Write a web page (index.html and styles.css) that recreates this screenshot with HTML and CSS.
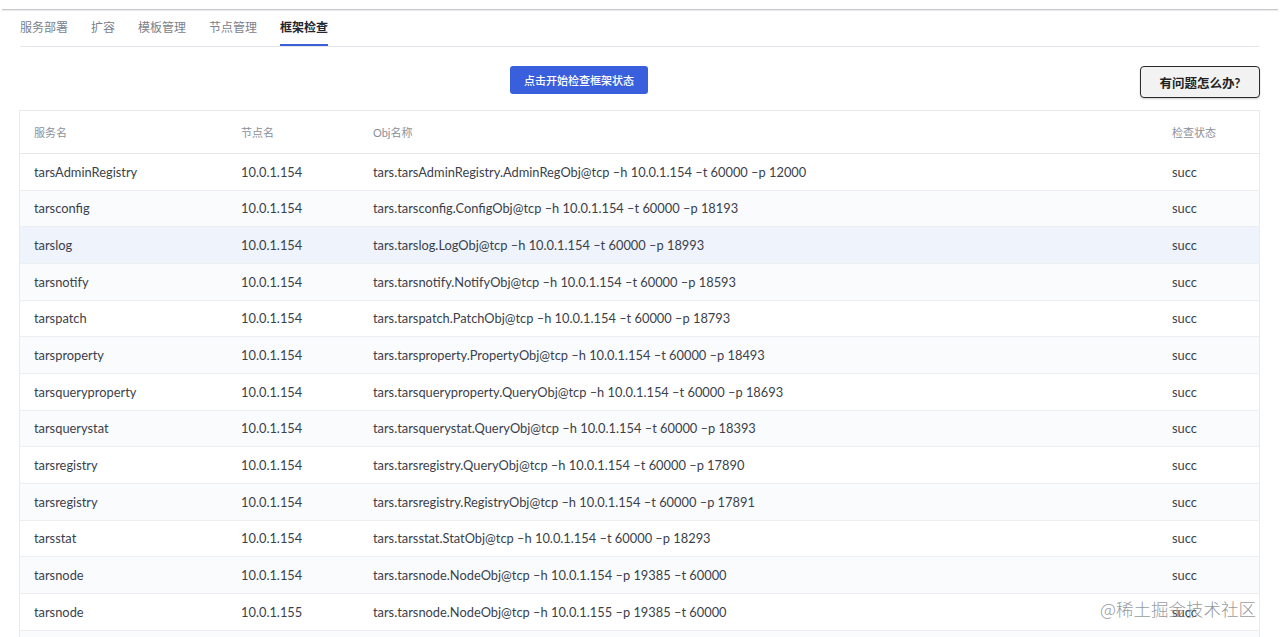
FILE: index.html
```html
<!DOCTYPE html>
<html lang="zh">
<head>
<meta charset="utf-8">
<link rel="stylesheet" href="styles.css">
</head>
<body>
<div class="topline"></div>
<div class="page">
  <nav class="tabs">
    <span class="tab">服务部署</span>
    <span class="tab">扩容</span>
    <span class="tab">模板管理</span>
    <span class="tab">节点管理</span>
    <span class="tab active">框架检查</span>
  </nav>
  <div class="toolbar">
    <button class="btn-primary">点击开始检查框架状态</button>
    <button class="btn-help">有问题怎么办?</button>
  </div>
  <table class="grid">
    <thead>
      <tr><th class="c1">服务名</th><th class="c2">节点名</th><th class="c3">Obj名称</th><th class="c4">检查状态</th></tr>
    </thead>
    <tbody>
      <tr><td>tarsAdminRegistry</td><td>10.0.1.154</td><td>tars.tarsAdminRegistry.AdminRegObj@tcp –h 10.0.1.154 –t 60000 –p 12000</td><td>succ</td></tr>
      <tr><td>tarsconfig</td><td>10.0.1.154</td><td>tars.tarsconfig.ConfigObj@tcp –h 10.0.1.154 –t 60000 –p 18193</td><td>succ</td></tr>
      <tr class="hover"><td>tarslog</td><td>10.0.1.154</td><td>tars.tarslog.LogObj@tcp –h 10.0.1.154 –t 60000 –p 18993</td><td>succ</td></tr>
      <tr><td>tarsnotify</td><td>10.0.1.154</td><td>tars.tarsnotify.NotifyObj@tcp –h 10.0.1.154 –t 60000 –p 18593</td><td>succ</td></tr>
      <tr><td>tarspatch</td><td>10.0.1.154</td><td>tars.tarspatch.PatchObj@tcp –h 10.0.1.154 –t 60000 –p 18793</td><td>succ</td></tr>
      <tr><td>tarsproperty</td><td>10.0.1.154</td><td>tars.tarsproperty.PropertyObj@tcp –h 10.0.1.154 –t 60000 –p 18493</td><td>succ</td></tr>
      <tr><td>tarsqueryproperty</td><td>10.0.1.154</td><td>tars.tarsqueryproperty.QueryObj@tcp –h 10.0.1.154 –t 60000 –p 18693</td><td>succ</td></tr>
      <tr><td>tarsquerystat</td><td>10.0.1.154</td><td>tars.tarsquerystat.QueryObj@tcp –h 10.0.1.154 –t 60000 –p 18393</td><td>succ</td></tr>
      <tr><td>tarsregistry</td><td>10.0.1.154</td><td>tars.tarsregistry.QueryObj@tcp –h 10.0.1.154 –t 60000 –p 17890</td><td>succ</td></tr>
      <tr><td>tarsregistry</td><td>10.0.1.154</td><td>tars.tarsregistry.RegistryObj@tcp –h 10.0.1.154 –t 60000 –p 17891</td><td>succ</td></tr>
      <tr><td>tarsstat</td><td>10.0.1.154</td><td>tars.tarsstat.StatObj@tcp –h 10.0.1.154 –t 60000 –p 18293</td><td>succ</td></tr>
      <tr><td>tarsnode</td><td>10.0.1.154</td><td>tars.tarsnode.NodeObj@tcp –h 10.0.1.154 –p 19385 –t 60000</td><td>succ</td></tr>
      <tr><td>tarsnode</td><td>10.0.1.155</td><td>tars.tarsnode.NodeObj@tcp –h 10.0.1.155 –p 19385 –t 60000</td><td>succ</td></tr>
      <tr class="empty"><td></td><td></td><td></td><td></td></tr>
    </tbody>
  </table>
</div>
<div class="watermark">@稀土掘金技术社区</div>
</body>
</html>
```
FILE: styles.css
```css
html, body {
  margin: 0;
  padding: 0;
  background: #ffffff;
  overflow: hidden;
  height: 637px;
}
body {
  font-family: Lato, "Noto Sans CJK SC", sans-serif;
  color: #3a3f4b;
  position: relative;
}
.topline {
  height: 1px;
  margin: 9px 2px 0 2px;
  background: #c9cbcf;
  box-shadow: 0 1px 1px #e6e7ea;
}
.page {
  padding: 0 21px 0 19px;
}
.tabs {
  display: flex;
  border-bottom: 1px solid #e3e5ea;
  margin-left: 1px;
  height: 36px;
}
.tab {
  font-size: 12px;
  line-height: 16px;
  color: #7b818c;
  padding-top: 10px;
  margin-right: 23px;
  height: 25px;
  box-sizing: border-box;
}
.tab.active {
  color: #222630;
  font-weight: 700;
  border-bottom: 2px solid #3b5fd8;
  height: 36px;
}
.toolbar {
  display: flex;
  justify-content: flex-end;
  align-items: flex-start;
  position: relative;
  height: 63px;
  padding-top: 19px;
  box-sizing: border-box;
}
.btn-primary {
  position: absolute;
  left: 491px;
  top: 19px;
  width: 138px;
  height: 28px;
  border: none;
  border-radius: 3px;
  background: #3a5fdc;
  color: #fff;
  font-family: Lato, "Noto Sans CJK SC", sans-serif;
  font-size: 11px;
  font-weight: 500;
}
.btn-help {
  width: 120px;
  height: 32px;
  margin-right: -1px;
  border: 1.5px solid #2b2b2b;
  border-radius: 4px;
  background: #f2f2f2;
  color: #1f1f1f;
  font-family: Lato, "Noto Sans CJK SC", sans-serif;
  font-size: 12.5px;
  font-weight: 700;
  box-shadow: 0 1px 2px rgba(0,0,0,0.2);
}
.grid {
  width: 1241px;
  border-collapse: collapse;
  border: 1px solid #e8eaee;
  table-layout: fixed;
}
.grid th {
  text-align: left;
  font-size: 11px;
  font-weight: 400;
  color: #8a8f99;
  height: 42px;
  padding: 0 0 0 14px;
  border-bottom: 1px solid #e6e8ec;
}
.grid th.c1 { width: 193px; }
.grid th.c2 { width: 118px; }
.grid th.c3 { width: 785px; }
.grid td {
  font-size: 12.85px;
  color: #3a3f4b;
  height: 35.67px;
  padding: 0 0 0 14px;
  border-bottom: 1px solid #eceef2;
  white-space: nowrap;
}
.grid tbody tr:nth-child(even) td { background: #fafbfd; }
.grid tbody tr.hover td { background: #eef3fc; }
.watermark {
  position: absolute;
  left: 1100px;
  top: 596px;
  font-size: 17.5px;
  color: rgba(120,124,132,0.8);
  font-family: "Noto Sans CJK SC", sans-serif;
  font-weight: 300;
}
```
